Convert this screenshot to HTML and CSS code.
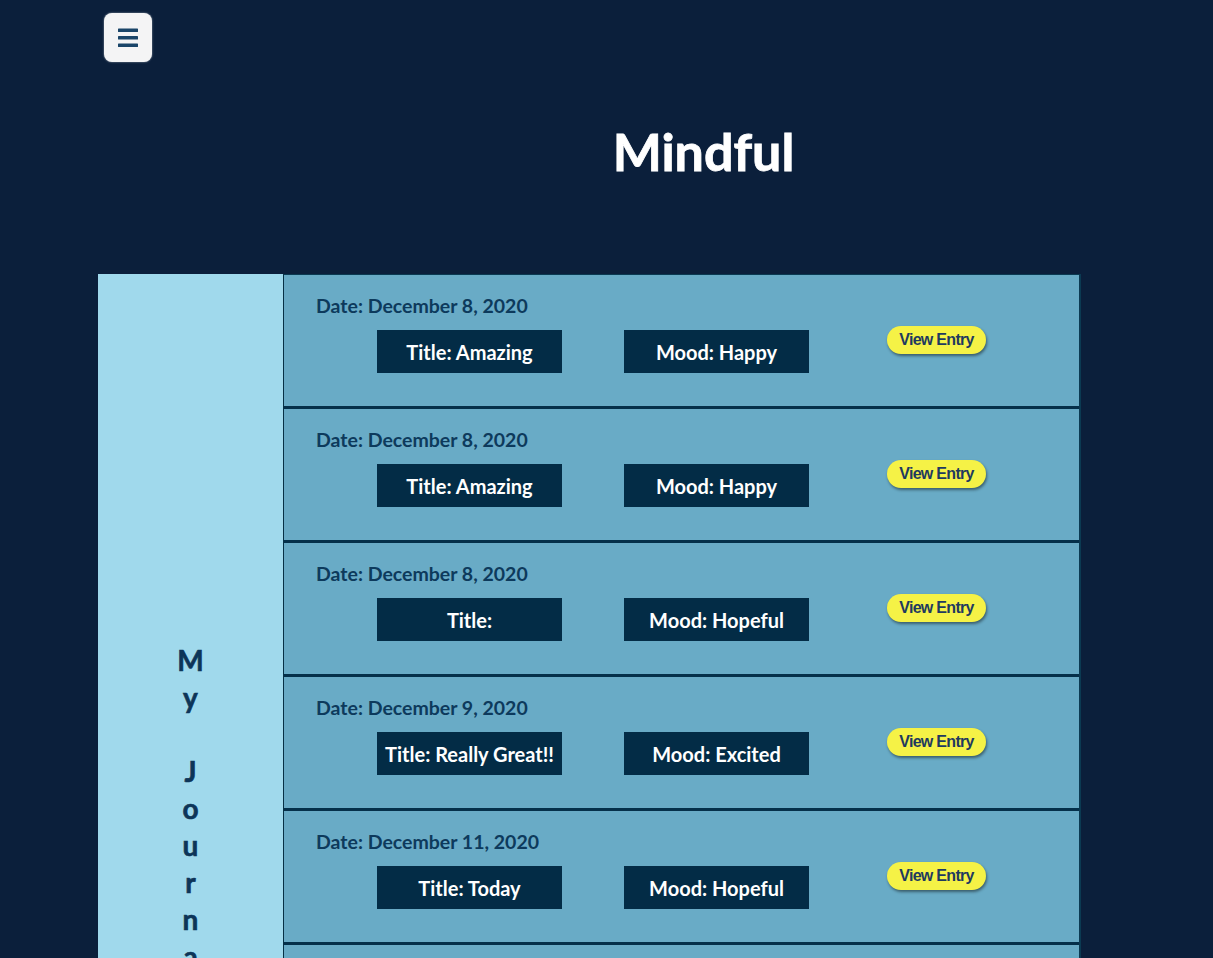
FILE: index.html
```html
<!DOCTYPE html>
<html lang="en">
<head>
<meta charset="utf-8">
<title>Mindful</title>
<link rel="stylesheet" href="styles.css">
</head>
<body>
<nav class="topbar">
  <button class="menu-btn" aria-label="Menu">
    <svg width="20" height="19" viewBox="0 0 20 19" aria-hidden="true">
      <rect x="0" y="0.5" width="20" height="3.6" rx="0.6" fill="#1a4569"/>
      <rect x="0" y="8" width="20" height="3.6" rx="0.6" fill="#1a4569"/>
      <rect x="0" y="15.5" width="20" height="3.6" rx="0.6" fill="#1a4569"/>
    </svg>
  </button>
</nav>
<h1 class="brand">Mindful</h1>
<main class="journal">
  <aside class="sidebar">
    <div class="sidebar-title">
      <span>M</span><span>y</span><span>&nbsp;</span><span>J</span><span>o</span><span>u</span><span>r</span><span>n</span><span>a</span><span>l</span>
    </div>
  </aside>
  <section class="entries">
    <article class="entry">
      <div class="entry-date">Date: December 8, 2020</div>
      <div class="entry-row">
        <div class="tag">Title: Amazing</div>
        <div class="tag">Mood: Happy</div>
        <button class="view-btn">View Entry</button>
      </div>
    </article>
    <article class="entry">
      <div class="entry-date">Date: December 8, 2020</div>
      <div class="entry-row">
        <div class="tag">Title: Amazing</div>
        <div class="tag">Mood: Happy</div>
        <button class="view-btn">View Entry</button>
      </div>
    </article>
    <article class="entry">
      <div class="entry-date">Date: December 8, 2020</div>
      <div class="entry-row">
        <div class="tag">Title:</div>
        <div class="tag">Mood: Hopeful</div>
        <button class="view-btn">View Entry</button>
      </div>
    </article>
    <article class="entry">
      <div class="entry-date">Date: December 9, 2020</div>
      <div class="entry-row">
        <div class="tag">Title: Really Great!!</div>
        <div class="tag">Mood: Excited</div>
        <button class="view-btn">View Entry</button>
      </div>
    </article>
    <article class="entry">
      <div class="entry-date">Date: December 11, 2020</div>
      <div class="entry-row">
        <div class="tag">Title: Today</div>
        <div class="tag">Mood: Hopeful</div>
        <button class="view-btn">View Entry</button>
      </div>
    </article>
    <article class="entry">
      <div class="entry-date">Date: December 12, 2020</div>
      <div class="entry-row">
        <div class="tag">Title: Calm</div>
        <div class="tag">Mood: Relaxed</div>
        <button class="view-btn">View Entry</button>
      </div>
    </article>
    <article class="entry">
      <div class="entry-date">Date: December 14, 2020</div>
      <div class="entry-row">
        <div class="tag">Title: Busy Day</div>
        <div class="tag">Mood: Tired</div>
        <button class="view-btn">View Entry</button>
      </div>
    </article>
    <article class="entry">
      <div class="entry-date">Date: December 15, 2020</div>
      <div class="entry-row">
        <div class="tag">Title: Grateful</div>
        <div class="tag">Mood: Happy</div>
        <button class="view-btn">View Entry</button>
      </div>
    </article>
  </section>
</main>
</body>
</html>
```
FILE: styles.css
```css
html, body {
  margin: 0;
  padding: 0;
  background: #0b1f3b;
}

body {
  font-family: "Lato", "Open Sans", sans-serif;
  color: #ffffff;
}

.topbar {
  padding: 13px 0 0 104px;
  height: 49px;
}

.menu-btn {
  width: 48px;
  height: 49px;
  padding: 0;
  border: none;
  border-radius: 8px;
  background: #f4f4f5;
  box-shadow: 0 0 2px rgba(255, 255, 255, 0.6);
  display: flex;
  align-items: center;
  justify-content: center;
  cursor: pointer;
}

.brand {
  margin: 58px 0 92px;
  padding-left: 194px;
  text-align: center;
  font-size: 52px;
  line-height: 62px;
  font-weight: 700;
  -webkit-text-stroke: 0.8px #ffffff;
  color: #ffffff;
}

.journal {
  display: flex;
  margin-left: 98px;
  width: 983px;
}

.sidebar {
  width: 185px;
  flex: none;
  background: #a0d9ec;
  display: flex;
  align-items: center;
  justify-content: center;
  padding-top: 33px;
  box-sizing: border-box;
}

.sidebar-title {
  display: flex;
  flex-direction: column;
  align-items: center;
  font-size: 28px;
  line-height: 37px;
  font-weight: 700;
  -webkit-text-stroke: 0.6px #0d3558;
  color: #0d3558;
}

.entries {
  flex: 1;
  background: #69abc6;
  border-top: 1px solid #0b3a52;
  border-left: 1px solid #063045;
  border-right: 2px solid #0b3a52;
}

.entry {
  height: 134px;
  box-sizing: border-box;
  border-bottom: 3px solid #05304a;
  padding: 19px 0 0 32px;
}

.entry-date {
  font-size: 19.5px;
  line-height: 24px;
  font-weight: 700;
  color: #0d3a5c;
}

.entry-row {
  display: flex;
  align-items: flex-start;
  margin-top: 12px;
  padding-left: 61px;
}

.tag {
  width: 185px;
  height: 43px;
  background: #032c46;
  color: #ffffff;
  font-size: 20px;
  font-weight: 700;
  display: flex;
  align-items: center;
  justify-content: center;
  margin-right: 62px;
}

.tag + .tag {
  margin-right: 78px;
}

.view-btn {
  margin-top: -4px;
  width: 99px;
  height: 28px;
  padding: 0 0 1px;
  border: none;
  border-radius: 14px;
  background: #f5f246;
  color: #1f3a5f;
  font-family: "Liberation Sans", Arial, sans-serif;
  font-size: 16px;
  letter-spacing: -0.7px;
  font-weight: 700;
  box-shadow: 1px 2px 3px rgba(0, 0, 0, 0.45);
  cursor: pointer;
}
```
